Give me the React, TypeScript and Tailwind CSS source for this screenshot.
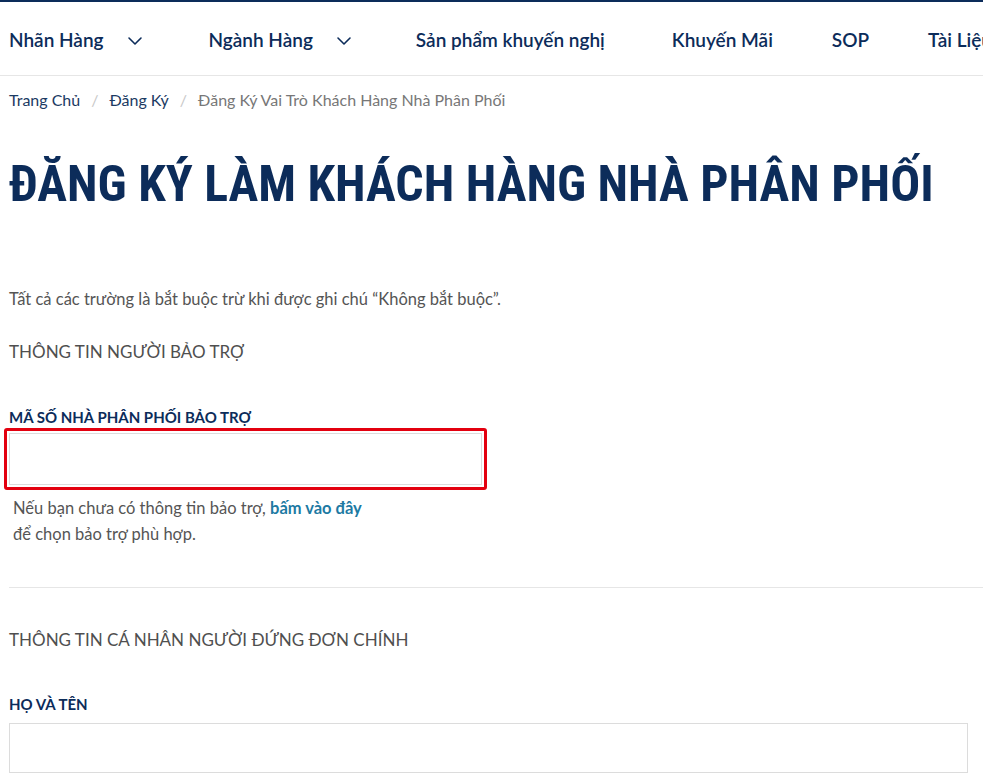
import React from 'react';

const navy = 'text-[#0c2c5a]';

function Chevron() {
  return (
    <svg width="16" height="16" viewBox="0 0 16 16" fill="none" className="ml-[23px]">
      <path d="M2 5l6 6 6-6" stroke="#0c2c5a" strokeWidth="1.6" strokeLinecap="round" strokeLinejoin="round" />
    </svg>
  );
}

function NavBar() {
  return (
    <nav className="h-[76px] pt-[4px] border-t-2 border-[#0c2c5a] border-b border-b-[#e6e6e6] flex items-center whitespace-nowrap overflow-hidden">
      <div className={`flex items-center pl-[9px] text-[19px] font-semibold ${navy}`}>
        <span className="flex items-center">Nhãn Hàng<Chevron /></span>
        <span className="flex items-center ml-[66px]">Ngành Hàng<Chevron /></span>
        <span className="ml-[64px]">Sản phẩm khuyến nghị</span>
        <span className="ml-[67px]">Khuyến Mãi</span>
        <span className="ml-[59px]">SOP</span>
        <span className="ml-[59px]">Tài Liệu</span>
      </div>
    </nav>
  );
}

function Breadcrumb() {
  return (
    <div className="flex items-center px-[9px] pt-[12px] text-[16px] whitespace-nowrap">
      <a className="text-[#1b3a63]">Trang Chủ</a>
      <span className="mx-[11px] text-[#c8c8c8]">/</span>
      <a className="text-[#1b3a63]">Đăng Ký</a>
      <span className="mx-[11px] text-[#c8c8c8]">/</span>
      <span className="text-[#777]">Đăng Ký Vai Trò Khách Hàng Nhà Phân Phối</span>
    </div>
  );
}

export default function App() {
  return (
    <div className="bg-white min-h-[783px] overflow-hidden" style={{ fontFamily: 'Lato, "Noto Sans", sans-serif' }}>
      <NavBar />
      <Breadcrumb />
      <div className="px-[9px]">
        <h1
          className={`mt-[42px] text-[49.8px] leading-[60px] font-bold ${navy} whitespace-nowrap`}
          style={{ fontFamily: '"Roboto Condensed", Roboto, sans-serif' }}
        >
          ĐĂNG KÝ LÀM KHÁCH HÀNG NHÀ PHÂN PHỐI
        </h1>
        <p className="mt-[73px] text-[16.5px] text-[#555]">
          Tất cả các trường là bắt buộc trừ khi được ghi chú “Không bắt buộc”.
        </p>
        <h2 className="mt-[27px] h-[27px] text-[17px] text-[#4f4f4f] uppercase">THÔNG TIN NGƯỜI BẢO TRỢ</h2>

        <label className={`block mt-[40px] text-[15px] font-bold ${navy}`}>MÃ SỐ NHÀ PHÂN PHỐI BẢO TRỢ</label>
        <div className="-ml-[5px] w-[483px] border-[3px] border-[#e3000f] rounded-[3px] p-[2px]">
          <input className="block w-full h-[52px] border border-[#dcdcdc] outline-none" />
        </div>
        <p className="mt-[5px] pl-[4px] text-[16.5px] leading-[26px] text-[#555]">
          Nếu bạn chưa có thông tin bảo trợ, <a className="font-bold text-[#1d7aa3]">bấm vào đây</a>
          <br />
          để chọn bảo trợ phù hợp.
        </p>
        <hr className="mt-[40px] border-t border-[#e6e6e6] -mr-[9px]" />

        <h2 className="mt-[39px] h-[27px] text-[17px] text-[#4f4f4f] uppercase">THÔNG TIN CÁ NHÂN NGƯỜI ĐỨNG ĐƠN CHÍNH</h2>
        <label className={`block mt-[39px] text-[15px] font-bold ${navy}`}>HỌ VÀ TÊN</label>
        <input className="block mt-[7px] w-[959px] h-[50px] border border-[#dcdcdc] outline-none" />
      </div>
    </div>
  );
}
